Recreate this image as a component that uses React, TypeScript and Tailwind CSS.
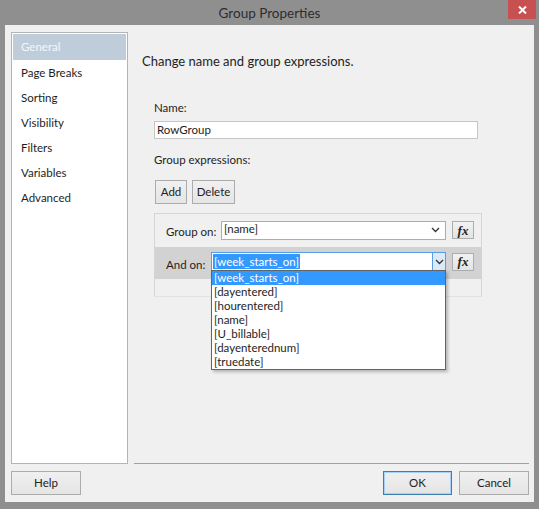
import React from 'react';

const font = { fontFamily: 'Lato, "Noto Sans", sans-serif' };

const navItems = ['General', 'Page Breaks', 'Sorting', 'Visibility', 'Filters', 'Variables', 'Advanced'];
const fields = ['[week_starts_on]', '[dayentered]', '[hourentered]', '[name]', '[U_billable]', '[dayenterednum]', '[truedate]'];

const Chevron = () => (
  <svg width="9" height="6" viewBox="0 0 9 6">
    <polyline points="1,1 4.5,4.5 8,1" fill="none" stroke="#333" strokeWidth="1.3" />
  </svg>
);

const FxButton = () => (
  <div className="w-[22px] h-[18px] border border-[#adadad] bg-gradient-to-b from-[#f2f2f2] to-[#e3e3e3] flex items-center justify-center">
    <span className="text-[13px] font-bold italic leading-none text-[#222]" style={{ fontFamily: '"Liberation Serif", serif' }}>
      fx
    </span>
  </div>
);

const Button = ({ label, w, primary }: { label: string; w: string; primary?: boolean }) => (
  <div
    className={`${w} h-[24px] flex items-center justify-center text-[11.5px] text-[#222] border bg-gradient-to-b from-[#f0f0f0] to-[#e5e5e5] ${
      primary ? 'border-[#3c7fb1] shadow-[inset_0_0_0_1px_#a9d0f5]' : 'border-[#acacac]'
    }`}
  >
    {label}
  </div>
);

const App = () => {
  return (
    <div className="w-[539px] h-[509px] bg-[#8f8f8f] flex flex-col overflow-hidden" style={font}>
      {/* title bar */}
      <div className="h-[25px] relative flex items-center justify-center">
        <span className="text-[13.5px] text-[#2d2d2d] pt-[1px]">Group Properties</span>
        <div className="absolute right-[3px] top-0 w-[28px] h-[19px] bg-[#c75050] flex items-center justify-center">
          <svg width="9" height="8" viewBox="0 0 9 8">
            <path d="M1 0.5 L8 7.5 M8 0.5 L1 7.5" stroke="#fff" strokeWidth="2" />
          </svg>
        </div>
      </div>

      {/* client area */}
      <div className="mx-[5px] h-[477px] bg-[#f0f0f0] flex flex-col pt-[7px] pl-[6px] pr-[5px]">
        <div className="flex h-[432px]">
          {/* sidebar */}
          <div className="w-[117px] h-[432px] bg-white border border-[#b4b4b4] p-[1px]">
            {navItems.map((item, i) => (
              <div
                key={item}
                className={`flex items-center pl-[8px] text-[11.5px] whitespace-nowrap ${
                  i === 0 ? 'bg-[#bfcddb] text-[#f4f7fa] h-[26px]' : 'h-[25px] text-[#1e1e1e]'
                }`}
              >
                {item}
              </div>
            ))}
          </div>

          {/* right panel */}
          <div className="ml-[6px] flex-1 border-b border-[#a0a0a0] relative">
            <div className="mt-[20px] ml-[8px] h-[20px] flex items-center text-[13px] text-[#1e1e1e] whitespace-nowrap">
              Change name and group expressions.
            </div>

            <div className="ml-[20px]">
              <div className="mt-[28px] h-[16px] flex items-center text-[11.5px] text-[#1e1e1e]">Name:</div>
              <div className="mt-[5px] w-[324px] h-[18px] bg-white border border-[#c6c6c6] flex items-center pl-[2px] text-[11.5px] text-[#1e1e1e]">
                RowGroup
              </div>
              <div className="mt-[13px] h-[16px] flex items-center text-[11.5px] text-[#1e1e1e] whitespace-nowrap">Group expressions:</div>
              <div className="mt-[12px] flex gap-[5px] ml-[1px]">
                <Button label="Add" w="w-[32px]" />
                <Button label="Delete" w="w-[43px]" />
              </div>

              {/* expressions grid */}
              <div className="mt-[9px] w-[328px] h-[84px] border border-[#d5d5d5] border-b-[#e3e3e3] relative">
                <div className="h-[33px] flex items-center pl-[11px]">
                  <span className="w-[55px] text-[11.5px] text-[#1e1e1e] pt-[2px] whitespace-nowrap">Group on:</span>
                  <div className="w-[225px] h-[19px] bg-white border border-[#acacac] flex items-center justify-between pl-[2px] pr-[5px] text-[11.5px] text-[#1e1e1e] -mt-[1px]">
                    <span className="-mt-[2px]">[name]</span>
                    <Chevron />
                  </div>
                  <div className="ml-[6px] -mt-[1px]">
                    <FxButton />
                  </div>
                </div>
                <div className="h-[32px] bg-[#d2d2d2] flex items-center pl-[11px]">
                  <span className="w-[45px] text-[11.5px] text-[#1e1e1e] pt-[3px] whitespace-nowrap">And on:</span>
                  <div className="w-[235px] h-[19px] bg-white border border-[#569de5] flex items-center justify-between -mt-[3px] relative">
                    <span className="ml-[1px] px-[1px] bg-[#3399ff] text-white text-[11.5px] leading-[15px]">[week_starts_on]</span>
                    <div className="w-[13px] h-full bg-[#daeaf8] border-l border-[#569de5] flex items-center justify-center">
                      <Chevron />
                    </div>

                    {/* open dropdown list */}
                    <div className="absolute left-[-1px] top-[17px] w-[235px] bg-white border border-[#646464] shadow-[2px_2px_3px_rgba(0,0,0,0.25)] z-10">
                      {fields.map((f, i) => (
                        <div
                          key={f}
                          className={`h-[14px] leading-[14px] pl-[2px] text-[11.5px] whitespace-nowrap ${
                            i === 0 ? 'bg-[#3399ff] text-white' : 'text-[#1e1e1e]'
                          }`}
                        >
                          {f}
                        </div>
                      ))}
                    </div>
                  </div>
                  <div className="ml-[6px] -mt-[3px]">
                    <FxButton />
                  </div>
                </div>
              </div>
            </div>
          </div>
        </div>

        {/* footer buttons */}
        <div className="mt-[7px] flex items-center">
          <Button label="Help" w="w-[70px]" />
          <div className="flex-1" />
          <Button label="OK" w="w-[69px]" primary />
          <div className="w-[7px]" />
          <Button label="Cancel" w="w-[70px]" />
        </div>
      </div>
    </div>
  );
};

export default App;
